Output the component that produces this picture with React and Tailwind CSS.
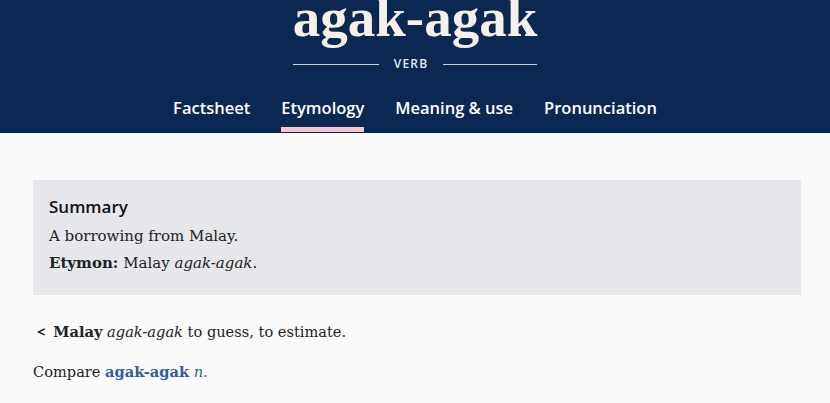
import React from "react";

const serif = { fontFamily: '"DejaVu Serif", "Liberation Serif", serif' };

export default function App() {
  const tabs = ["Factsheet", "Etymology", "Meaning & use", "Pronunciation"];
  const active = "Etymology";

  return (
    <div className="min-h-[403px] bg-[#fafafa] font-['Open_Sans',sans-serif] text-[#222]">
      {/* Header */}
      <header className="h-[133px] overflow-hidden bg-[#0b2853]">
        <div className="flex flex-col items-center">
          <h1 className="font-['Liberation_Serif',serif] text-[55px] font-bold leading-[36px] text-[#f4f0ea]">
            agak-agak
          </h1>
          <div className="mt-[21px] flex h-[14px] items-center gap-[15px]">
            <span className="h-px w-[86px] bg-[#c9cdd8]" />
            <span className="text-[12px] font-semibold tracking-[0.1em] text-[#e5e7ee]">VERB</span>
            <span className="h-px w-[94px] bg-[#c9cdd8]" />
          </div>
          <nav className="mt-[25px] flex gap-[31px]">
            {tabs.map((t) => (
              <a
                key={t}
                className={
                  "border-b-[5px] pb-[7px] text-[16.5px] font-semibold leading-[24px] text-white " +
                  (t === active ? "border-[#f7c6d0]" : "border-transparent")
                }
              >
                {t}
              </a>
            ))}
          </nav>
        </div>
      </header>

      {/* Content */}
      <main className="pl-[33px] pr-[29px] pt-[47px]">
        <section className="bg-[#e6e7eb] px-[16px] pt-[15px] pb-[18px]">
          <h2 className="mb-[4px] text-[17px] font-semibold leading-[24px] text-[#111]">Summary</h2>
          <p style={serif} className="text-[15px] leading-[27px]">A borrowing from Malay.</p>
          <p style={serif} className="text-[15px] leading-[27px]">
            <b>Etymon:</b> Malay <i>agak-agak</i>.
          </p>
        </section>

        <p style={serif} className="mt-[23px] text-[14.6px] leading-[27px]">
          <span className="mr-[8px] ml-[4px] font-['Open_Sans',sans-serif] font-bold">&lt;</span>
          <b>Malay</b> <i>agak-agak</i> to guess, to estimate.
        </p>
        <p style={serif} className="mt-[13px] text-[14.6px] leading-[27px]">
          Compare <a className="font-bold text-[#2f5f9a]">agak-agak</a>{" "}
          <i className="text-[#2f5f9a]">n.</i>
        </p>
      </main>
    </div>
  );
}
